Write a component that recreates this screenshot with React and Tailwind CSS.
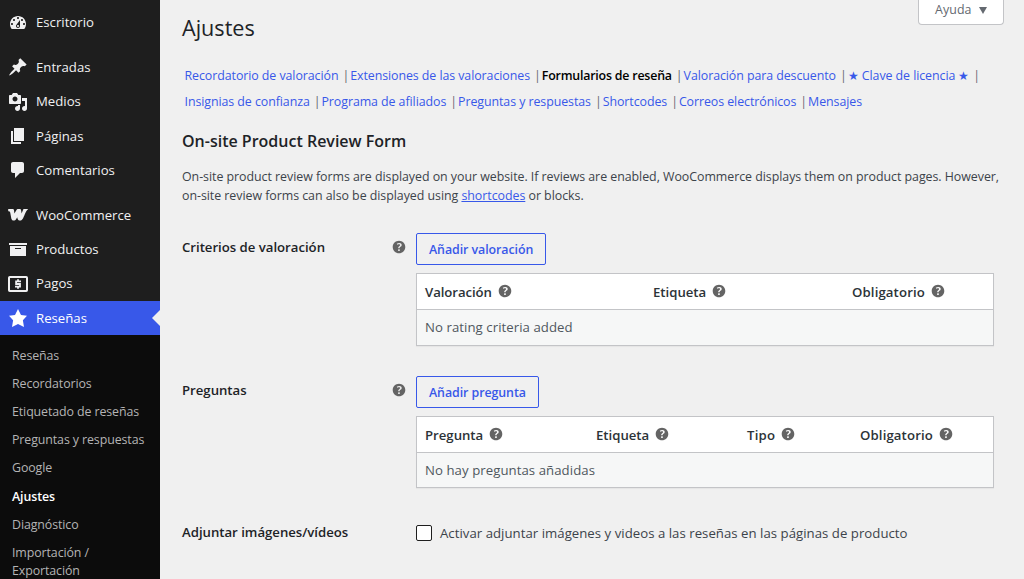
const icons = {
  dashboard:
    "M3.76 16h12.48c1.1-1.37 1.76-3.11 1.76-5 0-4.42-3.58-8-8-8s-8 3.58-8 8c0 1.89.66 3.63 1.76 5zM10 4c.55 0 1 .45 1 1s-.45 1-1 1-1-.45-1-1 .45-1 1-1zM6 6c.55 0 1 .45 1 1s-.45 1-1 1-1-.45-1-1 .45-1 1-1zm8 0c.55 0 1 .45 1 1s-.45 1-1 1-1-.45-1-1 .45-1 1-1zm-5.37 5.55L12 7v6c0 1.1-.9 2-2 2s-2-.9-2-2c0-.57.24-1.08.63-1.45zM4 10c.55 0 1 .45 1 1s-.45 1-1 1-1-.45-1-1 .45-1 1-1zm12 0c.55 0 1 .45 1 1s-.45 1-1 1-1-.45-1-1 .45-1 1-1zm-5 3c0-.55-.45-1-1-1s-1 .45-1 1 .45 1 1 1 1-.45 1-1z",
  pin: "M10.44 3.02l1.82-1.82 6.36 6.35-1.83 1.82c-1.05-.68-2.48-.57-3.41.36l-.75.75c-.92.93-1.04 2.35-.35 3.41l-1.83 1.82-2.41-2.41-2.8 2.79c-.42.42-3.38 2.71-3.8 2.29s1.86-3.39 2.28-3.81l2.79-2.79L4.1 9.36l1.83-1.82c1.05.69 2.48.57 3.4-.36l.75-.75c.93-.92 1.05-2.35.36-3.41z",
  media:
    "M13 11V4c0-.55-.45-1-1-1h-1.67L9 1H5L3.67 3H2c-.55 0-1 .45-1 1v7c0 .55.45 1 1 1h10c.55 0 1-.45 1-1zM7 4.5c1.38 0 2.5 1.12 2.5 2.5S8.38 9.5 7 9.5 4.5 8.38 4.5 7 5.62 4.5 7 4.5zM14 6h5v10.5c0 1.38-1.12 2.5-2.5 2.5S14 17.88 14 16.5s1.12-2.5 2.5-2.5c.17 0 .34.02.5.05V9h-3V6zm-4 8.05V13h2v3.5c0 1.38-1.12 2.5-2.5 2.5S7 17.88 7 16.5 8.12 14 9.5 14c.17 0 .34.02.5.05z",
  page: "M6 15V2h10v13H6zm-1 1h8v2H3V5h2v11z",
  comment:
    "M5 2h9c1.1 0 2 .9 2 2v7c0 1.1-.9 2-2 2h-2l-5 5v-5H5c-1.1 0-2-.9-2-2V4c0-1.1.9-2 2-2z",
  woo: "M.2 4.1h4.6c.7 0 1.1.4 1.2 1.1l.4 3.4 2.1-3.6c.4-.7.9-.9 1.6-.9h1.8c.7 0 1.1.4 1.2 1.1l.5 3.2 1.3-3.2c.3-.8.8-1.1 1.6-1.1h3.6c-1.6 1-2.4 3.2-3.5 5.6-1 2.2-1.9 5.9-4.6 5.9-1.4 0-2.2-.9-2.5-2.1l-.3-1.2-1 1.6c-.7 1.1-1.4 1.7-2.5 1.7-1.3 0-2.1-.8-2.4-2.1L2.2 7.4C2 6.5 1.4 6.2.2 6.2z",
  archive: "M19 4v2H1V4h18zM2 7h16v10H2V7zm11 3V9H7v1h6z",
  star: "M10 1l3 6 6 .75-4.12 4.62L16 19l-6-3-6 3 1.13-6.63L1 7.75 7 7z",
  help: "M17 10c0-3.87-3.14-7-7-7-3.87 0-7 3.13-7 7s3.13 7 7 7c3.86 0 7-3.13 7-7zm-6.3 1.48H9.14v-.43c0-.38.08-.7.24-.98s.46-.57.88-.89c.41-.29.68-.53.81-.71.14-.18.2-.39.2-.62 0-.25-.09-.44-.28-.58-.19-.13-.45-.19-.79-.19-.58 0-1.25.15-2 .46l-.64-1.28c.87-.49 1.8-.74 2.77-.74.81 0 1.45.2 1.92.58.48.39.71.91.71 1.55 0 .43-.09.8-.29 1.11-.19.32-.57.67-1.11 1.06-.38.28-.61.49-.71.63-.1.15-.15.34-.15.57v.35zm-1.47 2.74c-.18-.17-.27-.42-.27-.73 0-.33.08-.58.26-.75s.43-.25.77-.25c.32 0 .57.09.75.26s.27.42.27.74c0 .3-.09.55-.27.72-.18.18-.43.27-.75.27-.33 0-.58-.09-.76-.26z",
};

const menuGroups = [
  [{ label: "Escritorio", icon: "dashboard" }],
  [
    { label: "Entradas", icon: "pin" },
    { label: "Medios", icon: "media" },
    { label: "Páginas", icon: "page" },
    { label: "Comentarios", icon: "comment" },
  ],
  [
    { label: "WooCommerce", icon: "woo" },
    { label: "Productos", icon: "archive" },
    { label: "Pagos", icon: "money" },
    { label: "Reseñas", icon: "star", active: true },
  ],
];

const submenu = [
  "Reseñas",
  "Recordatorios",
  "Etiquetado de reseñas",
  "Preguntas y respuestas",
  "Google",
  "Ajustes",
  "Diagnóstico",
  "Importación / Exportación",
];

const tabRows = [
  [
    "Recordatorio de valoración",
    "Extensiones de las valoraciones",
    "Formularios de reseña",
    "Valoración para descuento",
    "★ Clave de licencia ★",
  ],
  [
    "Insignias de confianza",
    "Programa de afiliados",
    "Preguntas y respuestas",
    "Shortcodes",
    "Correos electrónicos",
    "Mensajes",
  ],
];

const MenuIcon = ({ name }) => {
  if (name === "money") {
    return (
      <svg className="size-5 shrink-0" viewBox="0 0 20 20" fill="none" stroke="currentColor">
        <rect x="1" y="3" width="18" height="14" rx="0.8" strokeWidth="2" />
        <path d="M13 7.4H8.1V10H12v2.6H7M10 5.2v2M10 12.6v2.2" strokeWidth="1.8" />
      </svg>
    );
  }
  return (
    <svg className="size-5 shrink-0" viewBox="0 0 20 20" fill="currentColor">
      <path d={icons[name]} />
    </svg>
  );
};

const HelpTip = ({ className = "" }) => (
  <svg className={`size-[18px] shrink-0 text-[#646464] ${className}`} viewBox="0 0 20 20" fill="currentColor">
    <path d={icons.help} />
  </svg>
);

const Sidebar = () => (
  <aside className="w-40 shrink-0 overflow-hidden bg-[#1e1e1e] pt-[5.5px] text-[#f0f0f1]">
    {menuGroups.map((group, i) => (
      <ul key={i} className={i > 0 ? "mt-[10.5px]" : ""}>
        {group.map((item) => (
          <li
            key={item.label}
            className={`relative flex h-[34.3px] items-center gap-2 pl-2 text-[13.2px] ${
              item.active ? "bg-[#3858e9] text-white" : ""
            }`}
          >
            <MenuIcon name={item.icon} />
            <span className="pt-[0.9px]">{item.label}</span>
            {item.active && (
              <span className="absolute right-0 top-[9px] border-y-8 border-r-8 border-y-transparent border-r-[#f0f0f0]" />
            )}
          </li>
        ))}
      </ul>
    ))}
    <ul className="h-[260px] bg-[#0c0c0c] pt-[6.4px]">
      {submenu.map((label) => (
        <li
          key={label}
          className={`px-3 py-[5px] text-[12.4px] leading-[18.2px] tracking-[-0.1px] ${
            label === "Ajustes" ? "font-semibold text-white" : "text-[#b4b4b5]"
          }`}
        >
          {label}
        </li>
      ))}
    </ul>
  </aside>
);

const Tabs = () => (
  <nav className="mt-5 pl-[2.5px] text-[12.4px] tracking-[-0.07px] whitespace-nowrap">
    {tabRows.map((row, i) => (
      <ul key={i} className="flex h-[26px] items-center">
        {row.map((tab, j) => (
          <li key={tab} className="flex">
            <a
              className={
                tab === "Formularios de reseña" ? "font-semibold tracking-[-0.2px] text-black" : "text-[#3858e9]"
              }
            >
              {tab}
            </a>
            {(i === 0 || j < row.length - 1) && <span className="pl-[4px] pr-[1px] text-[#646970]">|</span>}
          </li>
        ))}
      </ul>
    ))}
  </nav>
);

const SettingRow = ({ title, tip, children, className = "" }) => (
  <div className={`flex ${className}`}>
    <div className="flex w-[234px] shrink-0 items-start justify-between pr-[8.5px] pt-[5px]">
      <h3 className="text-[13.2px] font-semibold leading-[18px] tracking-[-0.02px] text-[#1d2327]">{title}</h3>
      {tip && <HelpTip />}
    </div>
    {children}
  </div>
);

const CriteriaTable = ({ button, columns, empty, bodyClass }) => (
  <div className="w-[578px]">
    <button className="h-8 rounded-[2px] border border-[#3858e9] px-3 pt-[2px] text-[12.4px] font-semibold tracking-[-0.07px] text-[#3858e9]">
      {button}
    </button>
    <div className="mt-2 border border-[#c3c4c7] text-[13.2px] shadow-[0_1px_1px_rgba(0,0,0,0.04)]">
      <div className="flex h-[36px] items-center border-b border-[#c3c4c7] bg-white pl-2 font-semibold text-[#2c3338]">
        {columns.map(([label, className]) => (
          <div key={label} className={`flex shrink-0 items-center gap-1 ${className}`}>
            <span className="pt-[2px]">{label}</span>
            <HelpTip className="-mt-[1px]" />
          </div>
        ))}
      </div>
      <div className={`flex items-center bg-[#f6f7f7] pl-2 tracking-[0.06px] text-[#50575e] ${bodyClass}`}>{empty}</div>
    </div>
  </div>
);

export default function App() {
  return (
    <div className="flex h-[579px] w-[1024px] overflow-hidden bg-[#f0f0f0] font-['Open_Sans',sans-serif]">
      <Sidebar />

      <main className="relative min-w-0 flex-1 pl-[22px]">
        <button className="absolute right-5 top-0 flex h-[25px] w-[86px] items-center rounded-b border border-t-0 border-[#c3c4c7] bg-white pb-[3px] pl-4 text-[12.4px] font-medium tracking-[0.1px] text-[#646970]">
          Ayuda
          <span className="ml-[7px] border-x-[4.5px] border-t-[7px] border-x-transparent border-t-[#646970]" />
        </button>

        <h1 className="pt-[13px] text-[21.6px] leading-[30px] text-[#1d2327]">Ajustes</h1>
        <Tabs />

        <h2 className="mt-[14px] text-[16px] font-semibold leading-[24px] text-[#1d2327]">
          On-site Product Review Form
        </h2>
        <p className="mt-[14px] text-[12.4px] leading-[19px] tracking-[-0.04px] whitespace-nowrap text-[#3c434a]">
          On-site product review forms are displayed on your website. If reviews are enabled, WooCommerce displays them
          on product pages. However,
          <br />
          on-site review forms can also be displayed using <a className="text-[#3858e9] underline">shortcodes</a> or
          blocks.
        </p>

        <SettingRow title="Criterios de valoración" tip className="mt-[28px]">
          <CriteriaTable
            button="Añadir valoración"
            columns={[
              ["Valoración", "w-[228px] tracking-[-0.08px]"],
              ["Etiqueta", "w-[199px] tracking-[-0.02px]"],
              ["Obligatorio", "w-[120px] tracking-[0.12px]"],
            ]}
            empty="No rating criteria added"
            bodyClass="h-[35px]"
          />
        </SettingRow>

        <SettingRow title="Preguntas" tip className="mt-[30px]">
          <CriteriaTable
            button="Añadir pregunta"
            columns={[
              ["Pregunta", "w-[171px] tracking-[-0.02px]"],
              ["Etiqueta", "w-[151px] tracking-[-0.02px]"],
              ["Tipo", "w-[113px] tracking-[0.2px]"],
              ["Obligatorio", "w-[120px] tracking-[0.12px]"],
            ]}
            empty="No hay preguntas añadidas"
            bodyClass="h-[34px] pt-[1px]"
          />
        </SettingRow>

        <SettingRow title="Adjuntar imágenes/vídeos" className="mt-[30px]">
          <label className="flex items-center gap-2 pt-[7px] text-[13.2px] leading-4 tracking-[0.03px] whitespace-nowrap text-[#3c434a]">
            <span className="size-4 rounded-[2px] border border-[#1e1e1e] bg-white" />
            Activar adjuntar imágenes y videos a las reseñas en las páginas de producto
          </label>
        </SettingRow>
      </main>
    </div>
  );
}
